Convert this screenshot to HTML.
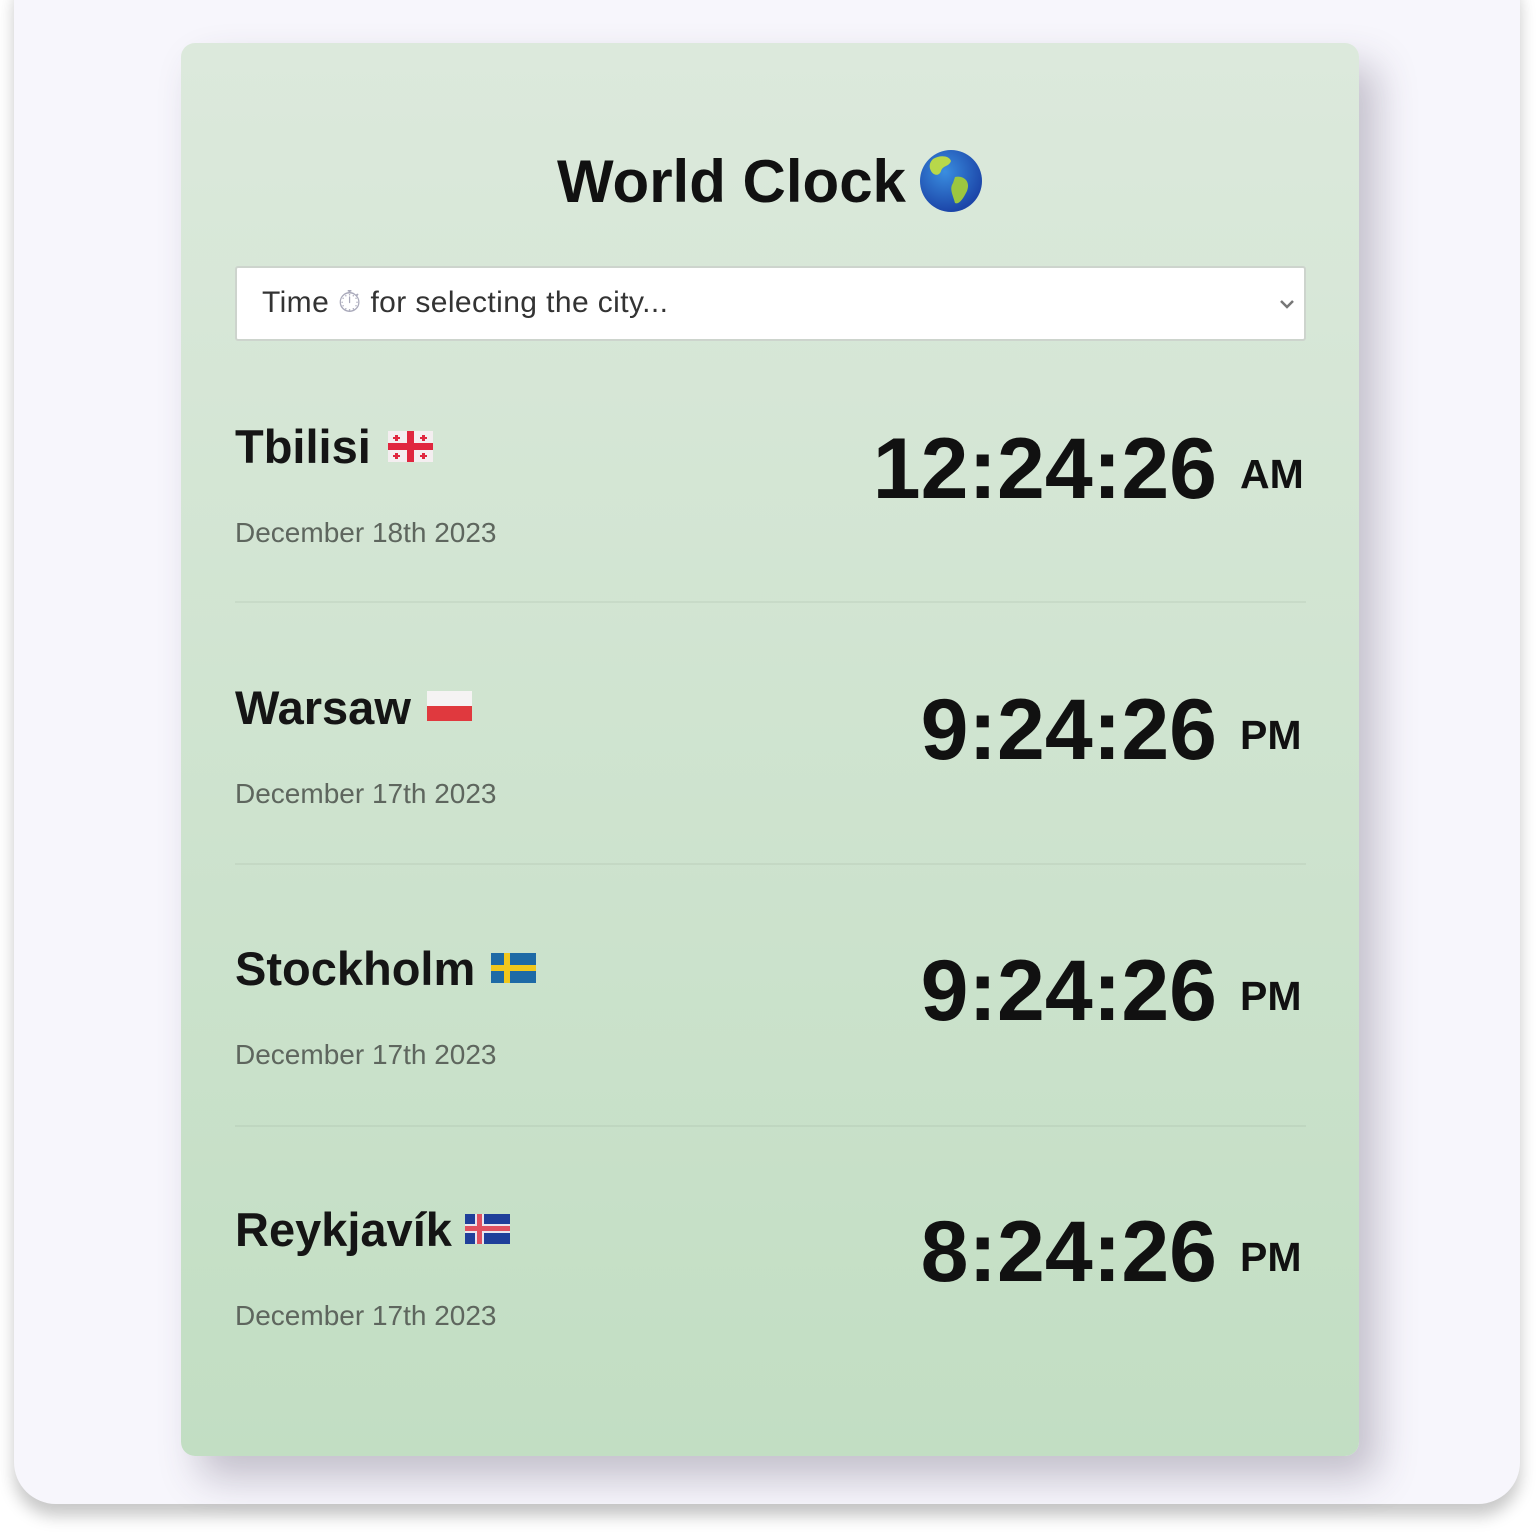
<!DOCTYPE html>
<html><head><meta charset="utf-8"><style>
html,body{margin:0;padding:0;width:1536px;height:1536px;background:#fff;overflow:hidden;font-family:"Liberation Sans",Arial,sans-serif}
.frame{position:absolute;left:14px;top:-40px;width:1506px;height:1544px;background:#f7f6fc;border-radius:42px;box-shadow:0 12px 16px rgba(0,0,0,0.22)}
.card{position:absolute;left:181px;top:43px;width:1178px;height:1413px;border-radius:14px;background:linear-gradient(#dce9dc,#c2dec3);box-shadow:18px 22px 40px rgba(60,50,80,0.28)}
.t{position:absolute;white-space:nowrap;line-height:1}
.title{left:557px;top:152px;font-size:60px;font-weight:bold;color:#111}
.sel{position:absolute;left:235px;top:266px;width:1067px;height:71px;background:#fff;border:2px solid #cdd4cd;border-radius:3px}
.seltxt{left:262px;top:288px;font-size:30px;color:#333;letter-spacing:0.4px}
.city{font-size:47px;font-weight:bold;color:#151515}
.date{font-size:28px;color:#5e665e}
.time{font-size:86px;font-weight:bold;color:#111;text-align:right;width:500px}
.ampm{font-size:41px;font-weight:bold;color:#111}
.div{position:absolute;left:235px;width:1071px;height:2px;background:rgba(0,0,0,0.045)}
svg{position:absolute}
</style></head><body>
<div class="frame"></div>
<div class="card"></div>
<div class="t title">World Clock</div>
<svg style="left:919px;top:149px" width="64" height="64" viewBox="0 0 64 64">
<defs><radialGradient id="g" cx="40%" cy="35%" r="65%"><stop offset="0" stop-color="#3a8ee0"/><stop offset="1" stop-color="#1c45a8"/></radialGradient></defs>
<circle cx="32" cy="32" r="31" fill="url(#g)"/>
<path d="M14 10 C20 6 30 6 32 12 C30 18 24 16 22 22 C20 28 14 26 12 22 C10 18 10 14 14 10Z" fill="#b8d84a"/>
<path d="M36 28 C44 26 52 32 48 42 C44 50 40 56 36 54 C34 46 30 40 34 34Z" fill="#9cc640"/>
</svg>
<div class="sel"></div>
<div class="t seltxt">Time <span style="color:#aab">⏱</span> for selecting the city...</div>
<svg style="left:1278px;top:298px" width="18" height="12" viewBox="0 0 18 12"><path d="M3 3 L9 9 L15 3" stroke="#777" stroke-width="2.5" fill="none"/></svg>

<div class="t city" style="left:235px;top:423px">Tbilisi</div>
<svg style="left:388px;top:431px" width="45" height="31" viewBox="0 0 45 31"><rect width="45" height="31" fill="#f4eef0"/><rect x="19" width="7" height="31" fill="#e0263f"/><rect y="12" width="45" height="7" fill="#e0263f"/><g fill="#e0263f"><rect x="7" y="4" width="3" height="6"/><rect x="5" y="6" width="7" height="2"/><rect x="34" y="4" width="3" height="6"/><rect x="32" y="6" width="7" height="2"/><rect x="7" y="22" width="3" height="6"/><rect x="5" y="24" width="7" height="2"/><rect x="34" y="22" width="3" height="6"/><rect x="32" y="24" width="7" height="2"/></g></svg>
<div class="t date" style="left:235px;top:519px">December 18th 2023</div>
<div class="t time" style="left:717px;top:426px">12:24:26</div>
<div class="t ampm" style="left:1240px;top:454px">AM</div>
<div class="div" style="top:601px"></div>

<div class="t city" style="left:235px;top:684px">Warsaw</div>
<svg style="left:427px;top:691px" width="45" height="30" viewBox="0 0 45 30"><rect width="45" height="15" fill="#f5f3f3"/><rect y="15" width="45" height="15" fill="#e0393e"/></svg>
<div class="t date" style="left:235px;top:780px">December 17th 2023</div>
<div class="t time" style="left:717px;top:687px">9:24:26</div>
<div class="t ampm" style="left:1240px;top:715px">PM</div>
<div class="div" style="top:863px"></div>

<div class="t city" style="left:235px;top:945px">Stockholm</div>
<svg style="left:491px;top:953px" width="45" height="30" viewBox="0 0 45 30"><rect width="45" height="30" fill="#1e6aa6"/><rect x="13" width="6" height="30" fill="#f1c71c"/><rect y="12" width="45" height="6" fill="#f1c71c"/></svg>
<div class="t date" style="left:235px;top:1041px">December 17th 2023</div>
<div class="t time" style="left:717px;top:948px">9:24:26</div>
<div class="t ampm" style="left:1240px;top:976px">PM</div>
<div class="div" style="top:1125px"></div>

<div class="t city" style="left:235px;top:1206px">Reykjavík</div>
<svg style="left:465px;top:1214px" width="45" height="30" viewBox="0 0 45 30"><rect width="45" height="30" fill="#1f3f9a"/><rect x="10" width="9" height="30" fill="#e8e4ee"/><rect y="10" width="45" height="9" fill="#e8e4ee"/><rect x="12" width="5" height="30" fill="#e05060"/><rect y="12" width="45" height="5" fill="#e05060"/></svg>
<div class="t date" style="left:235px;top:1302px">December 17th 2023</div>
<div class="t time" style="left:717px;top:1209px">8:24:26</div>
<div class="t ampm" style="left:1240px;top:1237px">PM</div>
</body></html>
